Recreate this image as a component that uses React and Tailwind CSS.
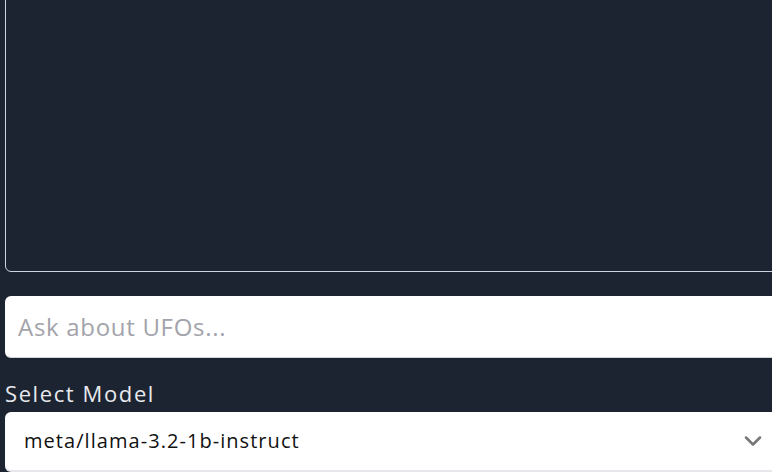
import { ChevronDown } from "lucide-react";

const App = () => {
    return (
        <div className="w-full h-[472px] overflow-hidden bg-[#1c2431] px-[5px]" style={{ fontFamily: '"Open Sans", sans-serif' }}>
            <div className="w-[790px] h-[282px] -mt-[10px] border border-[#cbd5e1] rounded-[6px]"></div>
            <div className="w-[790px] h-[62px] mt-[24px] bg-white rounded-[6px] border-b border-[#d1d5db] flex items-center px-[13px]">
                <input className="w-full outline-none bg-transparent text-[24px] tracking-[0.7px] text-[#111] placeholder:text-[#a3a3ab]" placeholder="Ask about UFOs..." />
            </div>
            <div className="mt-[21px] text-[22px] leading-[28px] text-[#e8eaee] tracking-[1.6px]">Select Model</div>
            <div className="w-[790px] h-[60px] mt-[5px] bg-white rounded-[6px] border-b-2 border-[#e5e7eb] flex items-center justify-between pl-[19px] pr-[28px]">
                <span className="text-[20px] text-[#111] tracking-[1.05px]">meta/llama-3.2-1b-instruct</span>
                <ChevronDown size={28} strokeWidth={2.2} className="text-[#777]" />
            </div>
        </div>
    );
};

export default App;
